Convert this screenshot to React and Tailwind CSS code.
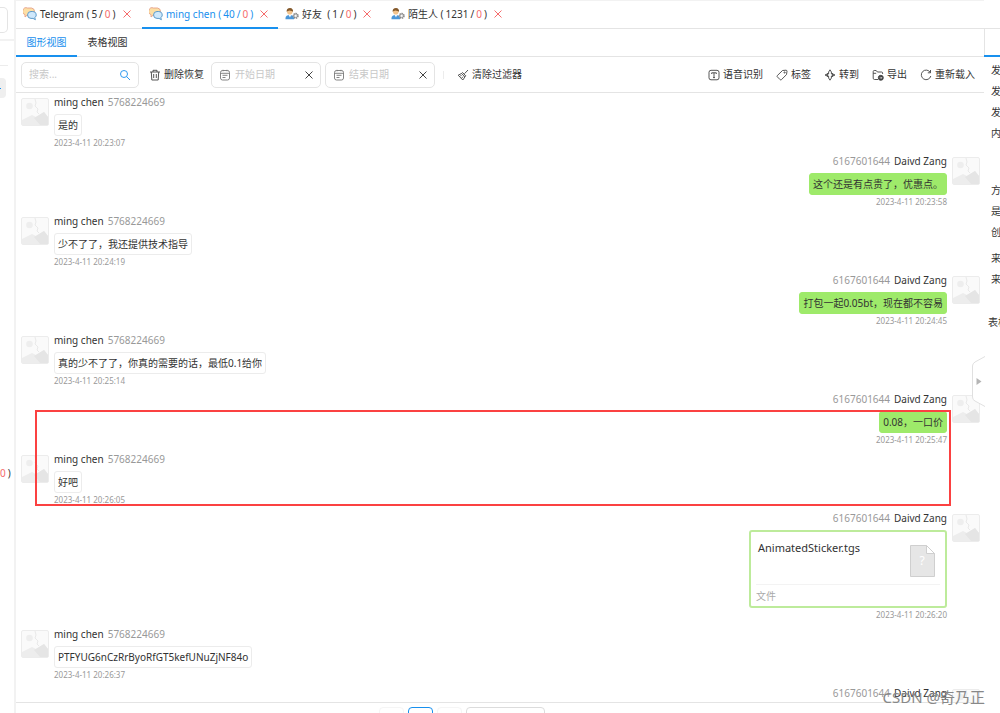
import React, { useState } from "react";

const messages = [
  { id: 1, mine: false, text: "是的", time: "2023-4-11 20:23:07" },
  { id: 2, mine: true, text: "这个还是有点贵了，优惠点。", time: "2023-4-11 20:23:58" },
  { id: 3, mine: false, text: "少不了了，我还提供技术指导", time: "2023-4-11 20:24:19" },
  { id: 4, mine: true, text: "打包一起0.05bt，现在都不容易", time: "2023-4-11 20:24:45" },
  { id: 5, mine: false, text: "真的少不了了，你真的需要的话，最低0.1给你", time: "2023-4-11 20:25:14" },
  { id: 6, mine: true, text: "0.08，一口价", time: "2023-4-11 20:25:47" },
  { id: 7, mine: false, text: "好吧", time: "2023-4-11 20:26:05" },
  { id: 8, mine: true, file: "AnimatedSticker.tgs", time: "2023-4-11 20:26:20" },
  { id: 9, mine: false, text: "PTFYUG6nCzRrByoRfGT5kefUNuZjNF84o", time: "2023-4-11 20:26:37" },
  { id: 10, mine: true, text: "", time: "" },
];

const tabs = [
  { id: "telegram", icon: "chat", name: "Telegram ", count: "5", width: "w-[126px]" },
  { id: "ming", icon: "chat", name: "ming chen ", count: "40", width: "w-[136px]" },
  { id: "friends", icon: "user", name: "好友  ", count: "1", width: "w-[106px]" },
  { id: "strangers", icon: "user", name: "陌生人 ", count: "1231", width: "w-[128px]" },
];

const ChatIcon = () => (
  <svg width="14" height="14" viewBox="0 0 14 14" className="shrink-0">
    <path d="M4.5 1h4A3.6 3.6 0 0 1 9 8L4 8.3 2 10V7.6A3.5 3.5 0 0 1 4.5 1z" fill="#fddfa5" stroke="#e5a088" strokeWidth="0.9" />
    <path d="M8 4.5h1.8a3.4 3.4 0 0 1 2 6.2l.6 2-2.4-1.3H8a3.4 3.4 0 0 1 0-6.9z" fill="#cfe8fb" stroke="#5e9bc9" strokeWidth="1" />
  </svg>
);

const UserIcon = () => (
  <svg width="14" height="14" viewBox="0 0 14 14" className="shrink-0">
    <path d="M0.500 12.3V11c0-2 1.800-3 4.200-3s4.300 1 4.300 3v1.300z" fill="#4b96d8" />
    <path d="M3.500 7.500h2.800L5 10.500z" fill="#fff" />
    <circle cx="4.800" cy="4.800" r="2.800" fill="#f3c48d" />
    <path d="M1.700 5C1.300 2.600 2.800 1.100 5 1.100S8.400 2.800 8 5C7.300 3.700 5.500 4 4.500 3.500 3.500 3.700 2.400 4 1.700 5z" fill="#84592b" />
    <circle cx="10.700" cy="8.800" r="2.300" fill="#c4c4c4" stroke="#888" strokeWidth="1.500" strokeDasharray="1.300 0.600" />
    <circle cx="10.700" cy="8.800" r="0.900" fill="#fff" />
  </svg>
);

const CloseIcon = () => (
  <svg width="8" height="8" viewBox="0 0 8 8" fill="none" stroke="currentColor">
    <path d="M0.500 0.500l7 7M7.500 0.500l-7 7" />
  </svg>
);

// 12px line icons of the toolbar
const icons = {
  search: <><circle cx="5" cy="5" r="3.500" /><path d="M7.600 7.600L11 11" /></>,
  trash: <><path d="M1 3h10M4 3V1.300h4V3M2.300 3l.5 8h6.400l.5-8M4.700 5v4M7.300 5v4" /></>,
  calendar: <><rect x="1.500" y="1.500" width="9" height="9.500" rx="2" /><path d="M1.500 4.300h9M3.500 6.300h5M3.500 8.500h3M4 .8v1.500M8 .8v1.500" /></>,
  broom: <><path d="M11 1L7.500 4.700M4.500 4.500L1.200 6.200 5.800 11 8 7.800M3 7.500L4.500 6M4.600 9.200l1.500-1.600" /><path d="M4.500 4.500l1-1 3.300 3.300-.8 1z" /></>,
  text: <><rect x="1" y="1.300" width="10" height="9.500" rx="2" /><path d="M3.700 5V3.800h4.600V5M6 3.800v4.800M5 8.600h2" /></>,
  tag: <><path d="M6.500 1.500L10 1.200c.7 0 1 .4 1 1L10.500 5.600 5.400 10.700c-.4.4-.8.4-1.200 0L1.300 7.800c-.4-.4-.4-.8 0-1.200z" /><circle cx="8.600" cy="3.500" r="0.600" /></>,
  move: <path d="M6 .8L4.600 3v2H3.400L1 6l2.400 1h1.200v2L6 11.200 7.400 9V7h1.200L11 6 8.600 5H7.400V3zM3.400 4v4M8.600 4v4" />,
  exportFolder: <><path d="M6 10.500H2.500c-.8 0-1.300-.5-1.300-1.300V2.500c0-.6.400-1 1-1h2l1.200 1.500h4.200c.6 0 1 .4 1 1v1M1.200 4.300h3" /><circle cx="8.800" cy="8.800" r="2.500" fill="currentColor" /><path d="M7.600 8.800h2.200M9 7.900l.9.900-.9.900" stroke="#fff" strokeWidth="0.600" /></>,
  reload: <path d="M10.300 3.500A4.800 4.800 0 1 0 10.800 7M10.500 1v2.800H7.800" />,
};

const Icon = ({ name, className = "text-[#444]" }) => (
  <svg width="12" height="12" viewBox="0 0 12 12" fill="none" stroke="currentColor" strokeWidth="0.900" strokeLinejoin="round" className={`shrink-0 ${className}`}>
    {icons[name]}
  </svg>
);

const ToolButton = ({ icon, children }) => (
  <button className="flex items-center gap-[3px] whitespace-nowrap">
    <Icon name={icon} />
    {children}
  </button>
);

const DateField = ({ label }) => (
  <div className="flex h-[26px] w-[110px] items-center gap-1 rounded-[5px] border border-[#e4e4e4] px-[7px]">
    <Icon name="calendar" className="text-[#777]" />
    <input aria-label={label} placeholder={label} className="w-full min-w-0 outline-none placeholder:text-[#c8c8c8]" />
    <button aria-label={`清除${label}`} className="shrink-0 text-[#444]"><CloseIcon /></button>
  </div>
);

const Avatar = () => (
  <svg width="28" height="28" viewBox="0 0 28 28" className="mt-[2px] shrink-0">
    <rect x="0.500" y="0.500" width="27" height="27" rx="1.500" fill="#fafafa" stroke="#ececec" />
    <circle cx="8.500" cy="8" r="3.300" fill="#eee" />
    <path d="M14 1l1 4-1 3 3 3-1 3 2 2" fill="none" stroke="#e9e9e9" />
    <path d="M1 22l10-5 4 2 8-5 4 5v8H1z" fill="#ededed" />
    <path d="M13 20l10-6 4 5v8H19z" fill="#e5e5e5" />
  </svg>
);

const FileCard = ({ name }) => (
  <div className="mt-[6px] flex h-[78px] w-[198px] flex-col rounded-[3px] border-2 border-[#bdeb9b] bg-white px-[5px]">
    <div className="flex h-[53px] justify-between border-b border-[#f3f3f3] pt-2 pr-[5px] pl-[2px]">
      <span className="text-[11px] leading-[16px]">{name}</span>
      <svg width="25" height="32" viewBox="0 0 25 32" className="mt-[5px]">
        <path d="M0.500 0.500h16l8 8v23H0.500z" fill="#e6e6e6" stroke="#cfcfcf" />
        <path d="M16.500 0.500v8h8z" fill="#fff" stroke="#cfcfcf" />
        <text x="12" y="20" textAnchor="middle" fontSize="12" fill="#fff">?</text>
      </svg>
    </div>
    <span className="pt-1 leading-[14px] text-[#aaa]">文件</span>
  </div>
);

const Message = ({ msg }) => {
  const height = msg.file ? "h-[116px]" : msg.mine ? "h-[60px]" : "h-[59px]";
  return (
    <div className={`flex shrink-0 items-start gap-[5px] ${height} ${msg.mine ? "flex-row-reverse" : ""}`}>
      <Avatar />
      <div className={`flex flex-col ${msg.mine ? "items-end" : "items-start"}`}>
        <div className={`flex gap-1 leading-[12px] ${msg.mine ? "flex-row-reverse" : ""}`}>
          <span>{msg.mine ? "Daivd Zang" : "ming chen"}</span>
          <span className="text-[#999]">{msg.mine ? "6167601644" : "5768224669"}</span>
        </div>
        {msg.file && <FileCard name={msg.file} />}
        {msg.text && (
          <p className={`mt-[6px] h-[22px] rounded-[3px] border px-[3px] leading-[20px] whitespace-nowrap ${msg.mine ? "border-[#9eea6a] bg-[#9eea6a]" : "border-[#ececec] bg-white"}`}>
            {msg.text}
          </p>
        )}
        {msg.time && <time className="text-[8px] leading-[14px] text-[#999]">{msg.time}</time>}
      </div>
    </div>
  );
};

const App = () => {
  const [activeTab, setActiveTab] = useState("ming");
  const [view, setView] = useState("graph");

  return (
    <div className="relative flex h-screen overflow-hidden bg-white font-['Noto_Sans','Noto_Sans_CJK_SC',sans-serif] text-[10px] text-[#333]">
      {/* CASE TREE */}
      <aside className="flex w-4 shrink-0 flex-col border-r-2 border-[#f2f2f2]">
        <div className="h-[41px] border-b-2 border-[#f2f2f2] pt-[7px]">
          <div className="h-[26px] w-2 rounded-r-[5px] border border-l-0 border-[#e4e4e4]"></div>
        </div>
        <div className="mr-[6px] h-[25px] border-b border-[#ececec]"></div>
        <div className="mt-3 flex h-5 w-[6px] items-center rounded-r-[4px] bg-[#efefef]">
          <div className="h-px w-px bg-[#1890ee]"></div>
        </div>
        <p className="mt-[368px] flex gap-[2px] leading-[14px]"><span className="text-[#f56c6c]">0</span>)</p>
      </aside>

      {/* MAIN CONTENT */}
      <main className="flex min-w-0 flex-1 flex-col">
        <nav className="flex h-[29px] shrink-0 border-t border-b border-t-[#f2f2f2] border-b-[#e4e4e4]">
          {tabs.map((tab) => (
            <div key={tab.id} className={`-mb-px flex items-center gap-[7px] border-b-2 pl-[7px] ${tab.width} ${activeTab === tab.id ? "border-[#1890ee] text-[#1890ee]" : "border-transparent"}`}>
              <button onClick={() => setActiveTab(tab.id)} className="flex items-center gap-[3px] whitespace-pre">
                {tab.icon === "chat" ? <ChatIcon /> : <UserIcon />}
                <span className="flex">
                  {tab.name}
                  <span className="flex gap-[2px]">
                    <span>(</span>
                    <span>{tab.count}</span>
                    <span>/</span>
                    <span className="text-[#f56c6c]">0</span>
                    <span>)</span>
                  </span>
                </span>
              </button>
              <button aria-label={`关闭 ${tab.name}`} className="text-[#f56c6c]"><CloseIcon /></button>
            </div>
          ))}
        </nav>

        <nav className="flex h-[28px] shrink-0 border-b border-[#e4e4e4]">
          <button onClick={() => setView("graph")} className={`-mb-px w-[61px] border-b-2 ${view === "graph" ? "border-[#1890ee] text-[#1890ee]" : "border-transparent"}`}>图形视图</button>
          <button onClick={() => setView("table")} className={`-mb-px w-[61px] border-b-2 ${view === "table" ? "border-[#1890ee] text-[#1890ee]" : "border-transparent"}`}>表格视图</button>
        </nav>

        {/* TOOLBAR */}
        <div className="flex h-[36px] shrink-0 items-center border-b border-[#e4e4e4] pr-[9px] pl-[5px]">
          <div className="mr-[10px] flex h-[26px] w-[118px] items-center rounded-[5px] border border-[#e4e4e4] px-[7px]">
            <input aria-label="搜索" placeholder="搜索..." className="w-full min-w-0 outline-none placeholder:text-[#c8c8c8]" />
            <button aria-label="搜索"><Icon name="search" className="text-[#1890ee]" /></button>
          </div>
          <ToolButton icon="trash">删除恢复</ToolButton>
          <div className="ml-[7px] flex items-center gap-1">
            <DateField label="开始日期" />
            <DateField label="结束日期" />
          </div>
          <div className="mx-2 h-2 w-px bg-[#ececec]"></div>
          <div className="ml-[5px]"><ToolButton icon="broom">清除过滤器</ToolButton></div>
          <div className="ml-auto flex gap-[13px]">
            <ToolButton icon="text">语音识别</ToolButton>
            <ToolButton icon="tag">标签</ToolButton>
            <ToolButton icon="move">转到</ToolButton>
            <ToolButton icon="exportFolder">导出</ToolButton>
            <ToolButton icon="reload">重新载入</ToolButton>
          </div>
        </div>

        {/* MESSAGES */}
        <section className="flex min-h-0 flex-1 flex-col overflow-hidden pt-[3px] pr-1 pl-[5px]">
          {messages.map((msg) => <Message key={msg.id} msg={msg} />)}
        </section>

        {/* PAGINATION */}
        <footer className="flex h-[11px] shrink-0 justify-center gap-1 overflow-hidden border-t border-[#e4e4e4] pt-1 pr-[76px]">
          <button aria-label="上一页" className="h-6 w-[25px] rounded-[4px] border border-[#f5f5f5]"></button>
          <button aria-label="当前页" className="h-6 w-[25px] rounded-[4px] border border-[#1890ee]"></button>
          <button aria-label="下一页" className="h-6 w-[25px] rounded-[4px] border border-[#f5f5f5]"></button>
          <select aria-label="每页条数" className="h-6 w-[79px] appearance-none rounded-[4px] border border-[#dcdcdc]"></select>
        </footer>
      </main>

      {/* DETAILS */}
      <aside className="w-4 shrink-0 overflow-hidden whitespace-nowrap">
        <div className="h-[57px] border-b-2 border-[#1890ee] pt-[28px]">
          <div className="h-[27px] border-t border-l border-[#e4e4e4]"></div>
        </div>
        <div className="pt-[3px] pl-[7px] leading-[21px]">
          <p>发</p>
          <p>发</p>
          <p>发</p>
          <p>内</p>
          <p className="mt-9">方</p>
          <p>是</p>
          <p>创</p>
          <p className="mt-[5px]">来</p>
          <p>来</p>
        </div>
        <p className="mt-[22px] pl-1 leading-[21px]">表格</p>
      </aside>

      <button aria-label="收起" className="absolute top-[356px] right-[15px]">
        <svg width="13" height="51" viewBox="0 0 13 51">
          <path d="M13 0.500L3 6Q0.500 7.500 0.500 10v31q0 3 2.500 4l10 5.500" fill="#fff" stroke="#e0e0e0" />
          <path d="M4.500 22l5 3.500-5 3.500z" fill="#b5b5b5" />
        </svg>
      </button>

      <div className="pointer-events-none absolute top-[410px] right-[49px] left-[35px] h-24 border-2 border-[#fb4141]"></div>
      <span className="pointer-events-none absolute right-[15px] bottom-[6px] text-[15px] leading-[20px] text-[#888]">CSDN @奇乃正</span>
    </div>
  );
};

export default App;
